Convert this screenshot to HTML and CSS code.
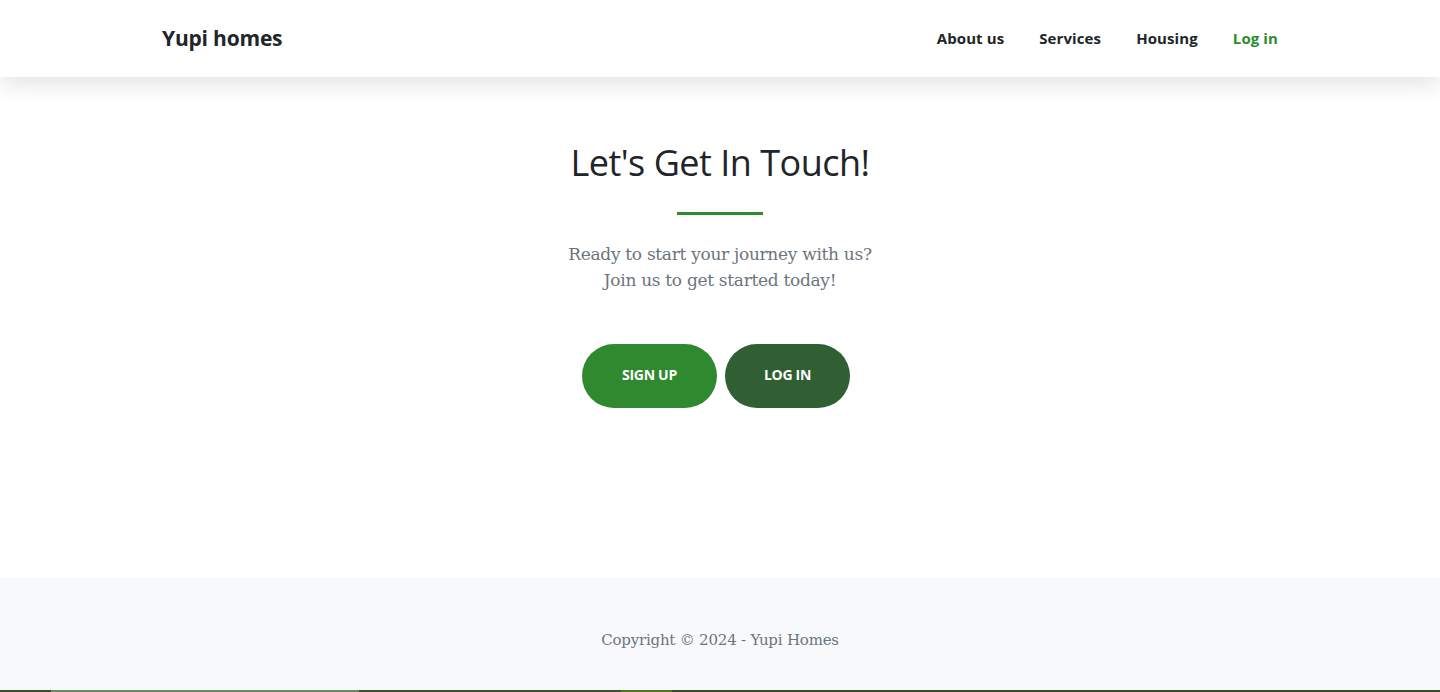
FILE: index.html
```html
<!DOCTYPE html>
<html lang="en">
<head>
<meta charset="utf-8">
<title>Yupi homes</title>
<link rel="stylesheet" href="styles.css">
</head>
<body>
<nav class="navbar">
  <div class="container nav-inner">
    <a class="brand" href="#">Yupi homes</a>
    <ul class="nav-links">
      <li><a href="#">About us</a></li>
      <li><a href="#">Services</a></li>
      <li><a href="#">Housing</a></li>
      <li><a class="active" href="#">Log in</a></li>
    </ul>
  </div>
</nav>
<main class="contact">
  <h2 class="title">Let's Get In Touch!</h2>
  <hr class="divider">
  <p class="lead">Ready to start your journey with us?<br>Join us to get started today!</p>
  <div class="actions">
    <a class="btn btn-primary" href="#">Sign up</a>
    <a class="btn btn-dark" href="#">Log in</a>
  </div>
</main>
<footer class="footer">
  <div class="copy">Copyright © 2024 - Yupi Homes</div>
</footer>
<div class="strip">
  <span class="s1"></span><span class="s2"></span><span class="s3"></span><span class="s4"></span><span class="s5"></span>
</div>
</body>
</html>
```
FILE: styles.css
```css
* { box-sizing: border-box; }
html, body { margin: 0; padding: 0; }
body {
  background: #fff;
  font-family: "DejaVu Serif", "Liberation Serif", serif;
  color: #212529;
  height: 692px;
  overflow: hidden;
  display: flex;
  flex-direction: column;
}
a { text-decoration: none; }
.container {
  width: 1140px;
  margin: 0 auto;
  padding: 0 12px;
}
.navbar {
  height: 77px;
  background: #fff;
  box-shadow: 0 6px 22px rgba(0,0,0,0.12);
  position: relative;
  z-index: 2;
  flex: none;
}
.nav-inner {
  height: 100%;
  display: flex;
  align-items: center;
  justify-content: space-between;
  padding-bottom: 2px;
}
.brand {
  font-family: "Open Sans", sans-serif;
  font-weight: 700;
  font-size: 21px;
  color: #212529;
  letter-spacing: -0.2px;
}
.nav-links {
  list-style: none;
  margin: 0;
  padding: 0;
  display: flex;
  gap: 35px;
}
.nav-links a {
  font-family: "Open Sans", sans-serif;
  font-weight: 700;
  font-size: 15px;
  color: #212529;
  letter-spacing: 0.1px;
}
.nav-links a.active { color: #2e8b2e; }
.contact {
  flex: 1;
  display: flex;
  flex-direction: column;
  align-items: center;
  padding-top: 62px;
}
.title {
  font-family: "Open Sans", sans-serif;
  font-weight: 400;
  font-size: 36px;
  line-height: 48px;
  margin: 0;
  color: #212529;
  letter-spacing: -0.5px;
}
.divider {
  width: 86px;
  height: 3px;
  border: 0;
  background: #2e8b2e;
  margin: 25px 0 0;
}
.lead {
  margin: 26px 0 0;
  text-align: center;
  font-size: 17px;
  line-height: 26px;
  color: #6c757d;
  letter-spacing: -0.3px;
}
.actions {
  display: flex;
  margin-top: 51px;
}
.btn {
  height: 64px;
  border-radius: 32px;
  margin-right: 8px;
  display: flex;
  align-items: center;
  justify-content: center;
  font-family: "Open Sans", sans-serif;
  font-weight: 700;
  font-size: 14px;
  text-transform: uppercase;
  color: #fff;
  letter-spacing: -0.3px;
  padding-bottom: 4px;
}
.btn-primary { background: #2f892f; width: 135px; }
.btn-dark { background: #2f5f32; width: 125px; }
.footer {
  flex: none;
  height: 112px;
  background: #f8f9fa;
  display: flex;
  align-items: center;
  justify-content: center;
  padding-top: 12px;
}
.copy {
  font-size: 15px;
  color: #6c757d;
  letter-spacing: -0.2px;
}
.strip {
  flex: none;
  height: 2px;
  display: flex;
}
.strip span { display: block; height: 100%; }
.s1 { width: 51px; background: #3a4f22; }
.s2 { width: 308px; background: #6b8a55; }
.s3 { width: 262px; background: #3b5522; }
.s4 { width: 51px; background: #4c7a1a; }
.s5 { flex: 1; background: #3a4d20; }
```
